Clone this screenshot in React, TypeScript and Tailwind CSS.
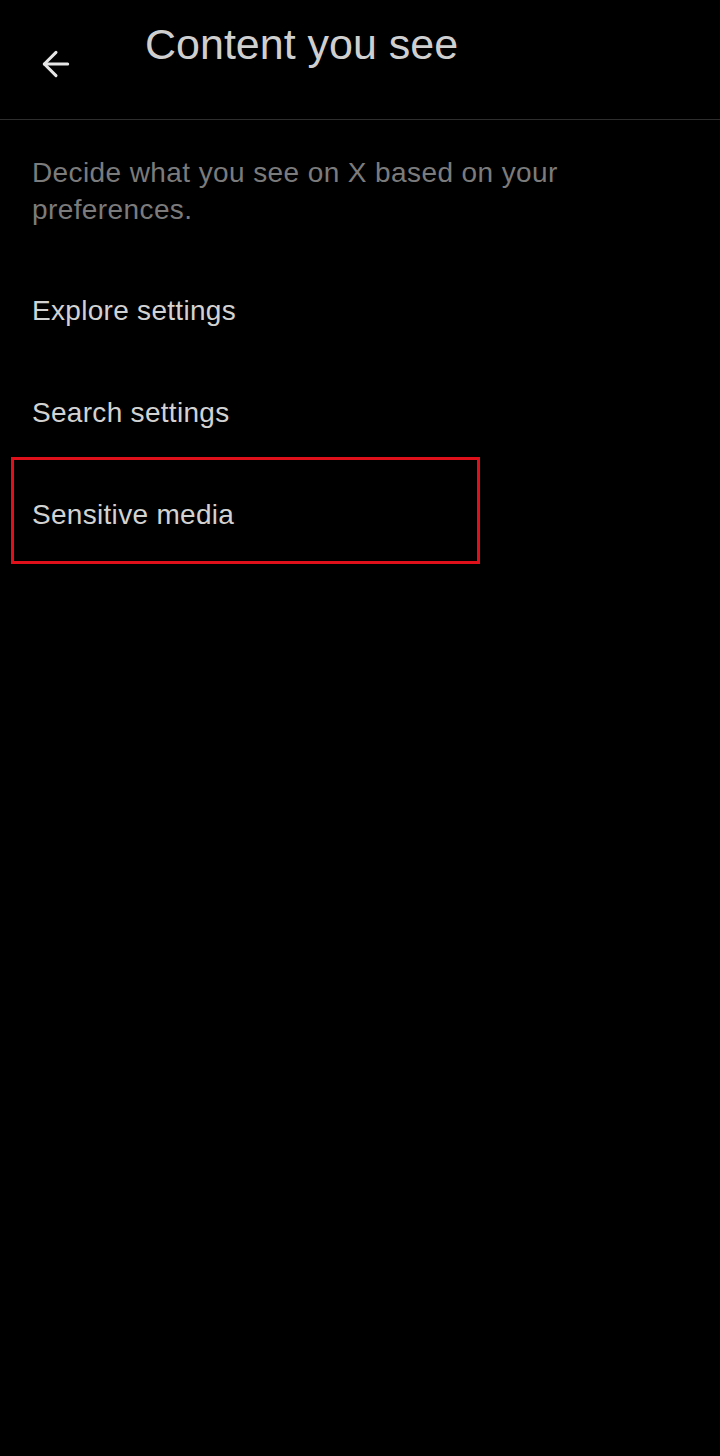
import { ArrowLeft } from "lucide-react";

const items = ["Explore settings", "Search settings", "Sensitive media"];

export default function App() {
	return (
		<main
			className="min-h-[1456px] w-[720px] bg-black"
			style={{ fontFamily: '"Liberation Sans", Arial, sans-serif' }}
		>
			<header className="flex h-[120px] border-b border-[#2e2e2e]">
				<button className="ml-[34px] mt-[44px] h-[40px] w-[44px] flex items-center justify-center text-[#e6e6e6]">
					<ArrowLeft size={40} strokeWidth={1.8} />
				</button>
				<h1 className="ml-[67px] mt-[23px] text-[43px] leading-none text-[#cfcfcf]">
					Content you see
				</h1>
			</header>

			<p className="w-[590px] px-8 pt-[34px] text-[28px] leading-[37px] tracking-[0.4px] text-[#7b7b7b]">
				Decide what you see on X based on your preferences.
			</p>

			<ul className="mt-[32px] px-[11px]">
				{items.map((label) => (
					<li
						key={label}
						className={
							label === "Sensitive media"
								? "-mt-[7px] flex h-[107px] w-[469px] items-center border-[3px] border-[#e0101a] px-[18px] pt-[9px] text-[28px] tracking-[0.3px] text-[#d2d2d2]"
								: "flex h-[102px] items-center px-[21px] text-[28px] tracking-[0.3px] text-[#d2d2d2]"
						}
					>
						{label}
					</li>
				))}
			</ul>
		</main>
	);
}
